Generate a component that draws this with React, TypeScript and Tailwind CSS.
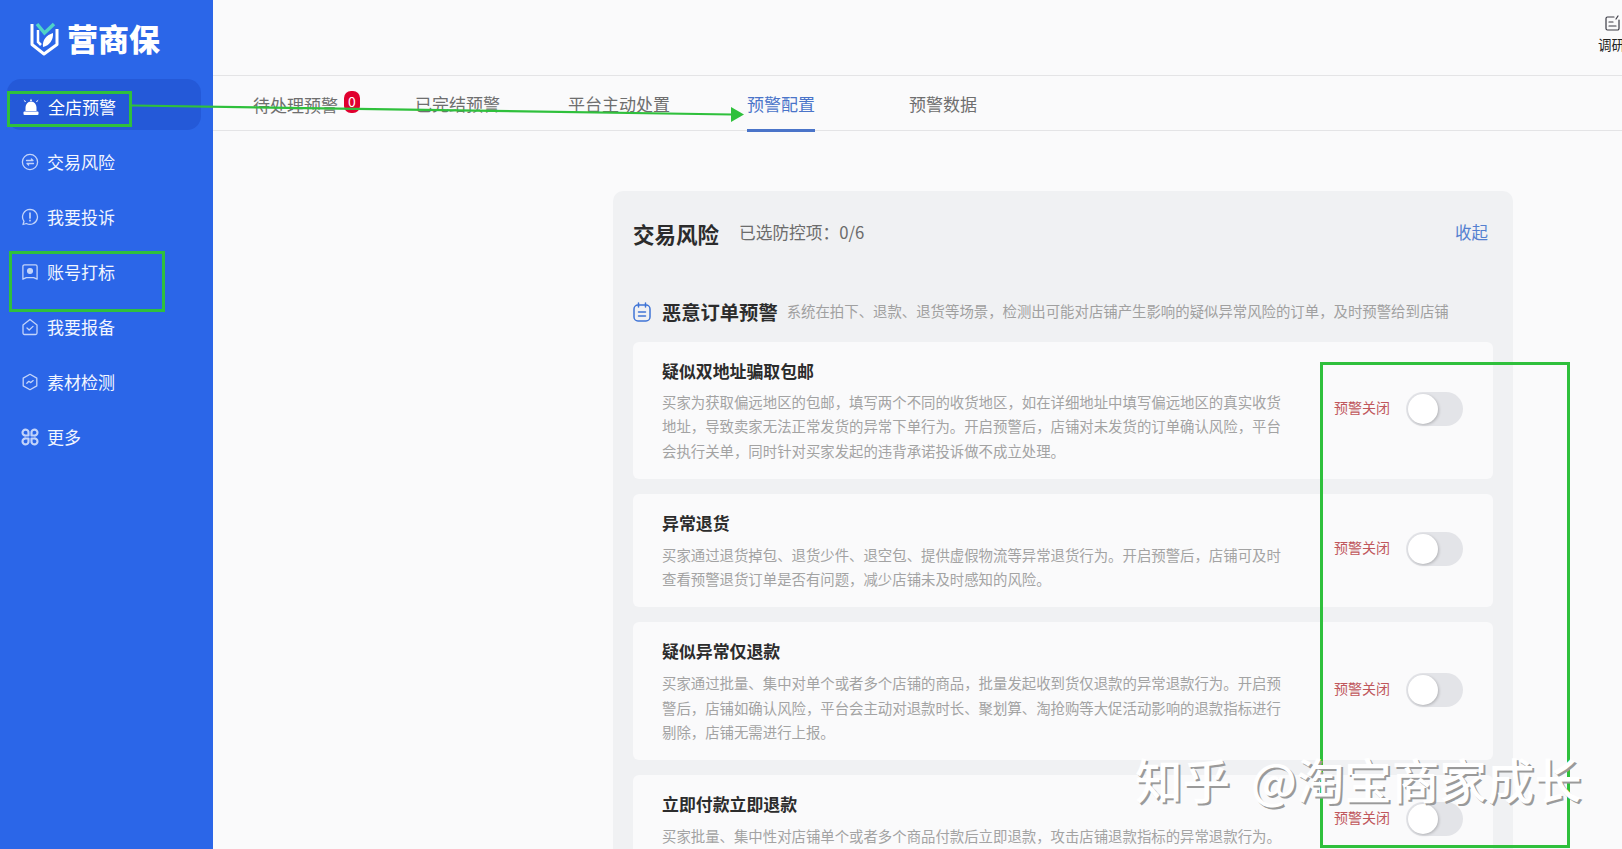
const menu = [
  { label: "交易风险", icon: "swap" },
  { label: "我要投诉", icon: "alert" },
  { label: "账号打标", icon: "tag" },
  { label: "我要报备", icon: "house" },
  { label: "素材检测", icon: "hex" },
  { label: "更多", icon: "more" },
];

const tabs = [
  { label: "已完结预警", className: "ml-[77px] border-transparent" },
  { label: "平台主动处置", className: "ml-[68px] border-transparent" },
  { label: "预警配置", className: "ml-[77px] text-[#4a74c9] border-[#4a74c9]" },
  { label: "预警数据", className: "ml-[94px] border-transparent" },
];

const rules = [
  {
    title: "疑似双地址骗取包邮",
    gap: "mt-[7px]",
    desc: "买家为获取偏远地区的包邮，填写两个不同的收货地区，如在详细地址中填写偏远地区的真实收货地址，导致卖家无法正常发货的异常下单行为。开启预警后，店铺对未发货的订单确认风险，平台会执行关单，同时针对买家发起的违背承诺投诉做不成立处理。",
  },
  {
    title: "异常退货",
    gap: "mt-[8px]",
    desc: "买家通过退货掉包、退货少件、退空包、提供虚假物流等异常退货行为。开启预警后，店铺可及时查看预警退货订单是否有问题，减少店铺未及时感知的风险。",
  },
  {
    title: "疑似异常仅退款",
    gap: "mt-[8px]",
    desc: "买家通过批量、集中对单个或者多个店铺的商品，批量发起收到货仅退款的异常退款行为。开启预警后，店铺如确认风险，平台会主动对退款时长、聚划算、淘抢购等大促活动影响的退款指标进行剔除，店铺无需进行上报。",
  },
  {
    title: "立即付款立即退款",
    gap: "mt-[8px]",
    desc: "买家批量、集中性对店铺单个或者多个商品付款后立即退款，攻击店铺退款指标的异常退款行为。",
  },
];

function MenuIcon({ name }: { name: string }) {
  const props = {
    width: 18,
    height: 18,
    viewBox: "0 0 18 18",
    fill: "none",
    stroke: "#c3d4fa",
    strokeWidth: 1.3,
    strokeLinecap: "round" as const,
    strokeLinejoin: "round" as const,
  };
  if (name === "swap")
    return (
      <svg {...props}>
        <circle cx="9" cy="9" r="7.6" />
        <path d="M5.5 7.5h6.5l-1.6-1.5M12.5 10.5H6l1.6 1.5" />
      </svg>
    );
  if (name === "alert")
    return (
      <svg {...props}>
        <path d="M9 1.4a7.5 7.5 0 1 1-3.6 14.1l-3.4 1 1-3.2A7.5 7.5 0 0 1 9 1.4Z" />
        <path d="M9 5v5M9 12.4v.3" strokeWidth="1.7" />
      </svg>
    );
  if (name === "tag")
    return (
      <svg {...props}>
        <path d="M3.5 1.8h11a1.6 1.6 0 0 1 1.6 1.6v12.8l-3.4-1.6H5.3l-3.4 1.6V3.4a1.6 1.6 0 0 1 1.6-1.6Z" />
        <circle cx="9" cy="8" r="2.4" fill="#c3d4fa" />
      </svg>
    );
  if (name === "house")
    return (
      <svg {...props}>
        <path d="M9 1.5l7 5.4v8.1a1.5 1.5 0 0 1-1.5 1.5h-11A1.5 1.5 0 0 1 2 15V6.9l7-5.4Z" />
        <path d="M6 10l2.2 2 3.8-3.6" />
      </svg>
    );
  if (name === "hex")
    return (
      <svg {...props}>
        <path d="M9 1.3l6.8 3.8v7.8L9 16.7l-6.8-3.8V5.1L9 1.3Z" />
        <path d="M5.8 10.2l2-1.9 2 1.3 2.4-2" />
      </svg>
    );
  return (
    <svg {...props} stroke="#c3d4fa" strokeWidth="2.200">
      <path d="M7.500 7.500H5a3 3 0 1 1 2.500-2.500ZM10.500 7.500H13a3 3 0 1 0-2.500-2.500ZM7.500 10.500H5a3 3 0 1 0 2.500 2.500ZM10.500 10.500H13a3 3 0 1 1-2.500 2.500Z" />
    </svg>
  );
}

function Logo() {
  return (
    <div className="h-[79px] pl-[30px] pt-[21px] flex items-start gap-[8px]">
      <svg className="mt-[1px]" width="29" height="34" viewBox="0 0 29 34" fill="none">
        <path d="M2 2v20.500L14 32l13-9.500V7" stroke="#ffffff" strokeWidth="3" strokeLinejoin="round" />
        <path d="M8 8v12l3 3" stroke="#ffffff" strokeWidth="2.500" />
        <path d="M13 25c-1-7 3.500-12 10-14 .5 7-3.500 12.500-10 14Z" fill="#ffffff" />
        <path d="M7 2l7.500 9L24 2" stroke="#4fd3c8" strokeWidth="3.500" />
      </svg>
      <span className="text-[31px] leading-[34px] font-black text-white">营商保</span>
    </div>
  );
}

function Sidebar() {
  return (
    <aside className="w-[213px] shrink-0 bg-[#2b66e8] text-white">
      <Logo />
      <div className="ml-[7px] w-[194px] h-[51px] rounded-[14px] bg-[#2459d8] pt-[4px] pl-[16px] flex items-center">
        <svg width="16" height="18" viewBox="0 0 16 18" fill="#ffffff">
          <path d="M8 0.500l1 2.500H7ZM0.500 1.500l2.500 2-1 .8ZM15.500 1.500l-2.500 2 1 .8Z" />
          <path d="M8 3.500c3.500 0 5.500 3 5.500 6.500v3h-11v-3c0-3.500 2-6.500 5.500-6.500Z" />
          <rect x="0.500" y="13.500" width="15" height="3.500" rx="1" />
        </svg>
        <span className="ml-[9px] text-[17px] leading-[24px] text-white">全店预警</span>
      </div>
      <nav className="mt-[4px] flex flex-col">
        {menu.map((item) => (
          <div key={item.label} className="h-[55px] pl-[21px] flex items-center gap-[8px]">
            <MenuIcon name={item.icon} />
            <span className="text-[17px] leading-[24px] text-[#f2f6ff]">{item.label}</span>
          </div>
        ))}
      </nav>
    </aside>
  );
}

function Tabs() {
  return (
    <div className="h-[55px] border-b border-[#e4e4e6] pl-[40px] flex text-[17px] text-[#6e6e6e] shrink-0">
      <div className="relative h-full flex items-center pt-[3px]">
        <span className="leading-[24px]">待处理预警</span>
        <span className="absolute left-[91px] top-[15px] w-[16px] h-[22px] rounded-[7px] bg-[#e0002e] text-white text-[14px] leading-[20px] text-center">
          0
        </span>
      </div>
      {tabs.map((tab) => (
        <div
          key={tab.label}
          className={`h-[56px] flex items-center leading-[24px] border-b-[3px] pt-[3px] ${tab.className}`}
        >
          {tab.label}
        </div>
      ))}
    </div>
  );
}

function Toggle() {
  return (
    <div className="w-[57px] h-[34px] rounded-full bg-[#e3e4e8] p-[2px]">
      <div className="w-[30px] h-[30px] rounded-full bg-white shadow-[1px_1px_3px_rgba(0,0,0,0.22)]" />
    </div>
  );
}

function RuleCard({ title, desc, gap }: { title: string; desc: string; gap: string }) {
  return (
    <div className="w-[860px] bg-[#fafafb] rounded-[6px] pl-[29px] pt-[17px] pb-[16px] flex items-center shrink-0">
      <div className="w-[620px]">
        <h3 className="mb-[1px] text-[16.900px] leading-[24px] font-bold text-[#2c2c2c]">{title}</h3>
        <p className={`${gap} text-[14.400px] leading-[24.300px] text-[#a3a3a3]`}>{desc}</p>
      </div>
      <div className="ml-[52px] flex items-center gap-[16px] -mt-[4px]">
        <span className="-mt-[4px] text-[14px] leading-[20px] text-[#c0575c]">预警关闭</span>
        <Toggle />
      </div>
    </div>
  );
}

function Panel() {
  return (
    <section className="ml-[400px] mt-[60px] w-[900px] rounded-[10px] bg-[#f0f1f3] pt-[28px] pl-[20px]">
      <div className="h-[30px] w-[855px] flex items-center">
        <h2 className="text-[21.500px] leading-[30px] font-bold text-[#2c2c2c]">交易风险</h2>
        <span className="ml-[20px] -mt-[4px] text-[16.700px] leading-[24px] text-[#6c6c6c]">已选防控项：0/6</span>
        <span className="ml-auto text-[16.500px] leading-[24px] text-[#5580d0] -mt-[4px]">收起</span>
      </div>
      <div className="mt-[48px] h-[30px] flex items-center">
        <svg width="18" height="20" viewBox="0 0 18 20" fill="none" stroke="#3f74d6" strokeWidth="1.500" strokeLinecap="round">
          <rect x="1" y="3" width="16" height="16" rx="4" />
          <path d="M5.500 1v4M12.500 1v4M5.500 10h7M5.500 14h7" />
        </svg>
        <h3 className="ml-[11px] text-[19.300px] leading-[30px] font-bold text-[#2c2c2c]">恶意订单预警</h3>
        <span className="ml-[9px] -mt-[2px] text-[14.400px] leading-[20px] text-[#a0a0a0] whitespace-nowrap">
          系统在拍下、退款、退货等场景，检测出可能对店铺产生影响的疑似异常风险的订单，及时预警给到店铺
        </span>
      </div>
      <div className="mt-[15px] flex flex-col gap-[15px]">
        {rules.map((rule) => (
          <RuleCard key={rule.title} title={rule.title} desc={rule.desc} gap={rule.gap} />
        ))}
      </div>
    </section>
  );
}

export default function App() {
  return (
    <div className="relative w-[1622px] h-[849px] overflow-hidden flex bg-[#fafafb] font-['Noto_Sans_CJK_SC','Noto_Sans',sans-serif]">
      <Sidebar />
      <main className="flex-1 min-w-0 flex flex-col">
        <header className="h-[76px] border-b border-[#e4e4e6] shrink-0 flex justify-end overflow-hidden">
          <div className="w-[24px] pt-[15px] flex flex-col items-start overflow-hidden">
            <svg className="ml-[7px]" width="15" height="16" viewBox="0 0 15 16" fill="none" stroke="#3a3a44" strokeWidth="1.200" strokeLinecap="round">
              <path d="M9 2H2.500A1.500 1.500 0 0 0 1 3.500v10A1.500 1.500 0 0 0 2.500 15h10a1.500 1.500 0 0 0 1.500-1.500V5" />
              <path d="M4 7h4M4 11h7M11 4l2-3" />
            </svg>
            <span className="mt-[4px] text-[13.500px] leading-[18px] text-[#222222] whitespace-nowrap">调研</span>
          </div>
        </header>
        <Tabs />
        <Panel />
      </main>

      {/* green markup drawn over the screenshot */}
      <div className="absolute left-[7px] top-[91px] w-[125px] h-[36px] border-[3px] border-[#2fc03c]" />
      <div className="absolute left-[9px] top-[251px] w-[156px] h-[61px] border-[3px] border-[#2fc03c]" />
      <div className="absolute left-[1320px] top-[362px] w-[250px] h-[486px] border-[3px] border-[#2fc03c]" />
      <svg className="absolute left-0 top-0 pointer-events-none" width="760" height="130" viewBox="0 0 760 130">
        <path d="M132 105.500L732 114.500" stroke="#2fc03c" strokeWidth="2.200" />
        <path d="M731 107l13 7.500-13 7.500Z" fill="#2fc03c" />
      </svg>

      {/* watermark */}
      <div className="absolute left-[1135px] top-[747px] text-[47.500px] leading-[64px] font-medium text-white whitespace-nowrap [word-spacing:10px] [text-shadow:2px_2px_0_#9a9a9a]">
        知乎 @淘宝商家成长
      </div>
    </div>
  );
}
